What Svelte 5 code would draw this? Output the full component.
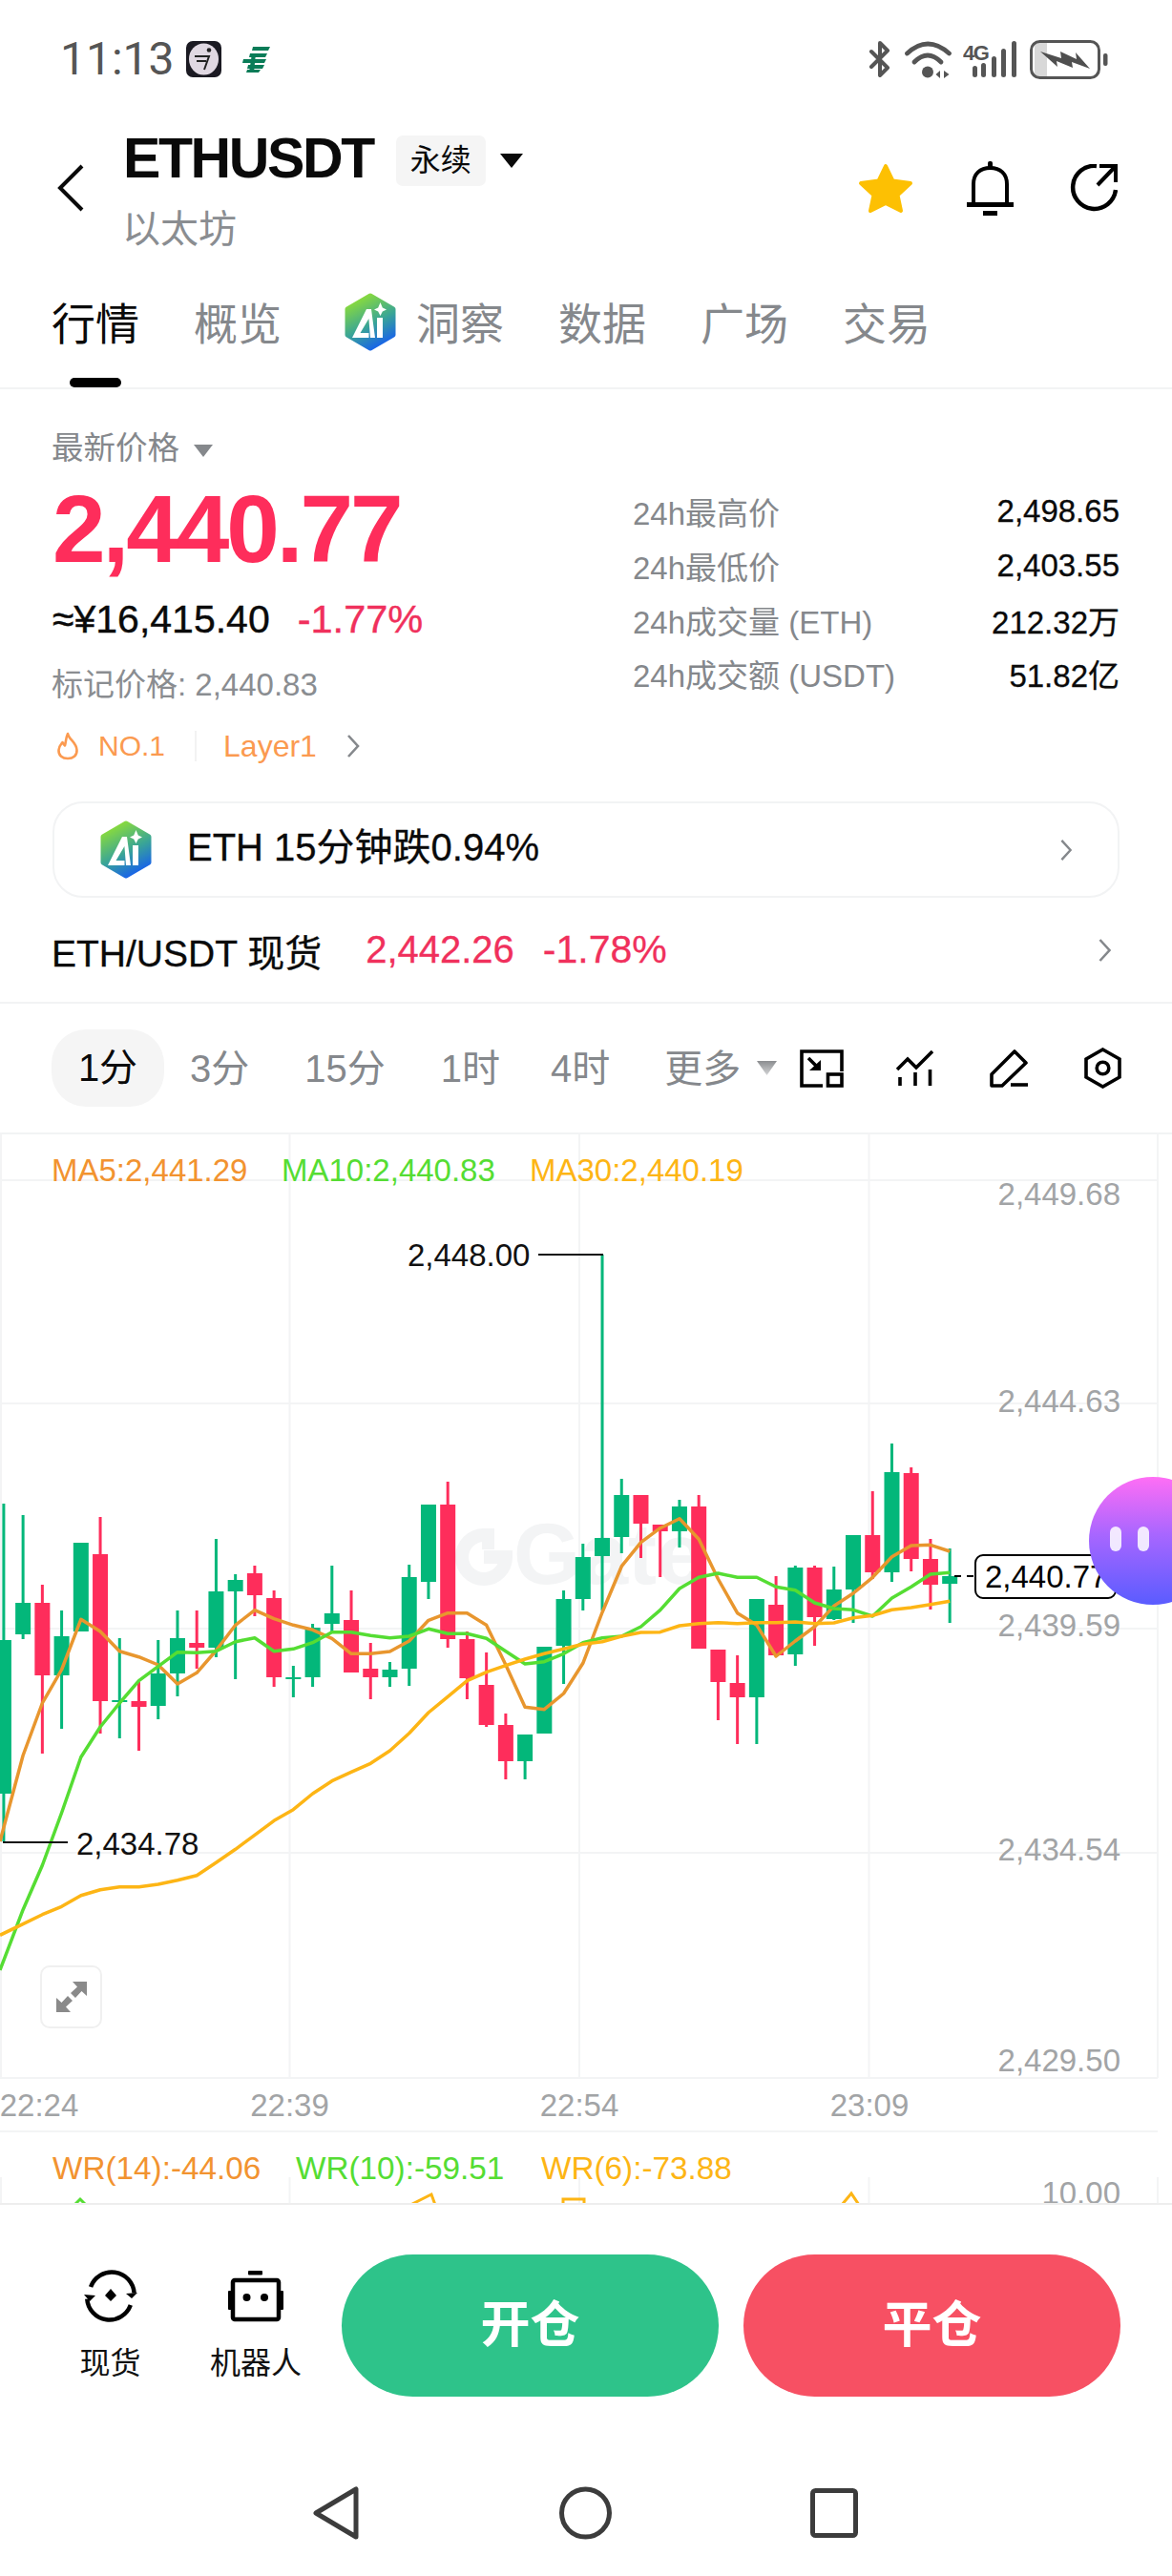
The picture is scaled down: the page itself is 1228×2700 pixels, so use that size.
<script>
  const tabs = ['概览'];
  const stats = [
    ['24h最高价', '2,498.65'],
    ['24h最低价', '2,403.55'],
    ['24h成交量 (ETH)', '212.32万'],
    ['24h成交额 (USDT)', '51.82亿']
  ];
  const candles = [
    ['g',1576,1719,1880,1930],['g',1588,1680,1713,1718],['r',1661,1680,1756,1838],['g',1688,1715,1756,1812],
    ['g',1617,1617,1710,1710],['r',1590,1629,1783,1817],['g',1717,1782,1784,1822],['r',1763,1783,1789,1835],
    ['g',1719,1754,1788,1802],['g',1688,1717,1754,1778],['r',1688,1722,1727,1749],['g',1613,1668,1727,1737],
    ['g',1650,1656,1668,1760],['r',1641,1649,1672,1694],['r',1667,1675,1758,1768],['g',1746,1758,1760,1779],
    ['g',1702,1706,1758,1768],['g',1641,1691,1702,1710],['r',1667,1698,1753,1753],['r',1722,1749,1758,1781],
    ['g',1742,1750,1758,1768],['g',1640,1653,1749,1767],['g',1577,1577,1658,1676],['r',1553,1577,1718,1727],
    ['r',1710,1718,1759,1781],['r',1732,1766,1808,1810],['r',1796,1808,1846,1865],['g',1818,1818,1846,1865],
    ['g',1726,1726,1817,1817],['g',1667,1676,1725,1765],['g',1618,1632,1676,1688],['g',1315,1612,1631,1688],
    ['g',1550,1567,1611,1628],['r',1567,1567,1597,1633],['r',1598,1598,1605,1653],['g',1572,1579,1605,1622],
    ['r',1567,1579,1728,1728],['r',1729,1729,1763,1803],['r',1735,1764,1779,1828],['g',1676,1676,1779,1828],
    ['r',1652,1682,1735,1735],['g',1641,1643,1734,1746],['r',1641,1643,1695,1725],['g',1642,1666,1697,1698],
    ['g',1609,1609,1666,1701],['r',1563,1609,1648,1655],['g',1513,1543,1648,1658],['r',1538,1544,1634,1647],
    ['r',1613,1634,1661,1687],['g',1623,1652,1660,1701]
  ];
  const ma5 = [990,720,555,450,292,330,392,410,435,495,460,390,310,263,290,310,325,352,400,400,393,360,295,272,272,310,435,568,575,525,430,270,125,50,5,-25,40,165,272,310,408,360,315,250,210,160,95,60,58,78];
  const ma10 = [1395,1205,1065,900,725,630,555,485,440,395,397,392,362,350,392,385,365,332,332,343,350,345,322,337,337,352,392,432,425,400,365,350,345,315,263,195,160,147,160,160,190,200,240,258,262,282,225,190,150,145];
  const ma30 = [1285,1250,1220,1195,1160,1142,1133,1133,1125,1112,1097,1057,1015,970,925,890,840,800,772,745,705,650,585,535,485,458,437,417,400,385,370,362,345,333,332,312,305,302,305,302,302,300,305,303,287,280,262,255,245,235];
  const cx = (i) => 3.9 + 20.23 * i;
  const pts = (a) => a.map((z, i) => `${i === 0 ? 0 : cx(i).toFixed(1)},${(1600 + z / 3).toFixed(1)}`).join(' ');
  const vLines = [1, 303.5, 607, 910.5, 1213];
  const hLines = [1237, 1471, 1707, 1942, 2178, 2234];
  const axis = [['2,449.68',1253],['2,444.63',1470],['2,439.59',1705],['2,434.54',1940],['2,429.50',2161]];
  const times = [['22:24',41],['22:39',303.5],['22:54',607],['23:09',911]];
</script>

{#snippet aiLogo(id)}
  <svg class="ai" viewBox="0 0 56 61" width="56" height="61">
    <defs>
      <linearGradient id={id} x1="0.25" y1="0" x2="0.7" y2="1">
        <stop offset="0" stop-color="#8fdf35"/>
        <stop offset="0.55" stop-color="#3aa596"/>
        <stop offset="1" stop-color="#165fee"/>
      </linearGradient>
    </defs>
    <path d="M28 3 L52 17 V44 L28 58 L4 44 V17 Z" fill={`url(#${id})`} stroke={`url(#${id})`} stroke-width="5" stroke-linejoin="round"/>
    <path d="M9 47 L24 17 H29 L33 47 H28 L26.4 27 L17.5 42 H26.5 V47 Z" fill="#fff"/>
    <rect x="35" y="26" width="6" height="21" fill="#fff"/>
    <path d="M38.5 10 L40.8 15.5 L45 17.5 L40.8 19.5 L38.5 24 L36.2 19.5 L32 17.5 L36.2 15.5 Z" fill="#fff"/>
  </svg>
{/snippet}

{#snippet chevron(w, h)}
  <svg viewBox="0 0 14 26" width={w} height={h} class="chev"><path d="M2 2 L12 13 L2 24" fill="none" stroke="#85888c" stroke-width="2.6"/></svg>
{/snippet}

<div class="page">
  <div class="status">
    <div class="status-left">
      <span class="clock">11:13</span>
      <svg class="app1" viewBox="0 0 37 38" width="37" height="38">
        <rect width="37" height="38" rx="7" fill="#1b1a22"/>
        <ellipse cx="18.5" cy="19" rx="15.5" ry="16.5" fill="#e0d8e2"/>
        <circle cx="24" cy="9.5" r="2.3" fill="#222"/>
        <path d="M9 16 H24 L19 30 M11 21 H21" fill="none" stroke="#222" stroke-width="2"/>
      </svg>
      <svg class="post" viewBox="0 0 29 27" width="29" height="27">
        <path d="M11 0 H29 L27 4 H10 Z M8 7 H26 L24 11 H7 Z M1 13 H25 L23 17 H0 Z M6 19 H23 L21 23 H5 Z M5 24 H19 L17 27 H4 Z" fill="#0a7c58"/>
        <path d="M10 7 H14 L12 27 H7 Z" fill="#0a7c58"/>
      </svg>
    </div>
    <div class="status-right">
      <svg viewBox="0 0 24 38" width="24" height="38"><path d="M3 11 L20 28 L12 36 V2 L20 10 L3 27" fill="none" stroke="#555" stroke-width="4" stroke-linejoin="round" stroke-linecap="round"/></svg>
      <svg class="wifi" viewBox="0 0 49 39" width="49" height="39">
        <g fill="none" stroke="#555" stroke-width="4.8" stroke-linecap="round">
          <path d="M2.5 13 Q24 -7 46.5 13"/><path d="M10 22 Q24 8 38 22"/>
        </g>
        <circle cx="24" cy="32.5" r="6" fill="#555"/>
        <path d="M37 31 V39 L32.5 35 Z M41 31 V39 L46.5 35 Z" fill="#555"/>
      </svg>
      <svg class="cell" viewBox="0 0 57 39" width="57" height="39">
        <text x="0" y="20" class="fourg">4G</text>
        <g fill="#555">
          <rect x="10" y="26" width="5" height="12" rx="2.5"/>
          <rect x="19" y="23" width="5" height="15" rx="2.5"/>
          <rect x="30" y="16" width="5" height="22" rx="2.5"/>
          <rect x="40" y="8" width="5" height="30" rx="2.5"/>
          <rect x="51" y="0" width="5" height="38" rx="2.5"/>
        </g>
      </svg>
      <svg class="batt" viewBox="0 0 82 41" width="82" height="41">
        <rect x="5" y="3" width="13" height="35" fill="#d8d8d8"/>
        <rect x="1.5" y="1.5" width="71" height="38" rx="9" fill="none" stroke="#555" stroke-width="3"/>
        <rect x="77" y="14" width="4.5" height="13" rx="2" fill="#555"/>
        <path d="M11 12 L33 19 L32 12 L49 20 L48 13 L63 30 L44 23 L45 29 L28 22 L29 28 Z" fill="#4f4f4f"/>
      </svg>
    </div>
  </div>

  <div class="header">
    <svg class="back" viewBox="0 0 28 50" width="28" height="50"><path d="M26 2 L3 25 L26 48" fill="none" stroke="#0a0a0a" stroke-width="4"/></svg>
    <div class="title-col">
      <div class="title-row">
        <span class="symbol">ETHUSDT</span>
        <span class="tag">永续</span>
        <svg viewBox="0 0 24 15" width="24" height="15" class="tag-arrow"><path d="M0 0 H24 L12 15 Z" fill="#0a0a0a"/></svg>
      </div>
      <div class="sub">以太坊</div>
    </div>
    <div class="head-icons">
      <svg viewBox="0 0 58 53" width="58" height="53"><path d="M29 3 L36.5 18.5 L55 21 L41.5 33.5 L45 50 L29 42 L13 50 L16.5 33.5 L3 21 L21.5 18.5 Z" fill="#fdc003" stroke="#fdc003" stroke-width="4" stroke-linejoin="round"/></svg>
      <svg viewBox="0 0 49 57" width="49" height="57">
        <path d="M7 46 V24 C7 13 14 7 24.5 7 C35 7 42 13 42 24 V46" fill="none" stroke="#000" stroke-width="4"/>
        <rect x="22" y="0" width="5" height="8" rx="2" fill="#000"/>
        <rect x="0" y="43" width="49" height="5" fill="#000"/>
        <rect x="17" y="52" width="15" height="5" fill="#000"/>
      </svg>
      <svg viewBox="0 0 50 50" width="50" height="50">
        <path d="M28 2 A22.5 22.5 0 1 0 48 27" fill="none" stroke="#000" stroke-width="4.5"/>
        <path d="M31 2 H48 V19 M48 2 L29 22" fill="none" stroke="#000" stroke-width="4"/>
      </svg>
    </div>
  </div>

  <div class="tabs">
    <div class="tab active">行情<div class="indicator"></div></div>
    {#each tabs as t}<div class="tab">{t}</div>{/each}
    <div class="tab ai-tab">{@render aiLogo('g1')}<span>洞察</span></div>
    <div class="tab">数据</div>
    <div class="tab">广场</div>
    <div class="tab">交易</div>
  </div>

  <div class="market">
    <div class="m-left">
      <div class="latest">最新价格<svg viewBox="0 0 20 13" width="20" height="13"><path d="M0 0 H20 L10 13 Z" fill="#85888c"/></svg></div>
      <div class="price">2,440.77</div>
      <div class="approx"><span>≈¥16,415.40</span><span class="red">-1.77%</span></div>
      <div class="mark">标记价格: 2,440.83</div>
      <div class="rank">
        <svg viewBox="0 0 24 30" width="24" height="30"><path d="M12 2 C13 8 21 11 21.5 19 C22 25 17.5 28 12 28 C6.5 28 2 25 2.5 19 C2.8 15 5 13 6.5 11 C7.5 13 8 14 9 14.5 C10 11 10 6 12 2 Z" fill="none" stroke="#fb9a50" stroke-width="2.6" stroke-linejoin="round"/></svg>
        <span class="no">NO.1</span>
        <span class="vsep"></span>
        <span class="layer">Layer1</span>
        {@render chevron(14, 26)}
      </div>
    </div>
    <div class="m-right">
      {#each stats as s}
        <div class="stat"><span class="k">{s[0]}</span><span class="v">{s[1]}</span></div>
      {/each}
    </div>
  </div>

  <div class="banner">
    {@render aiLogo('g2')}
    <span class="banner-text">ETH 15分钟跌0.94%</span>
    {@render chevron(14, 24)}
  </div>

  <div class="spot">
    <span class="spot-name">ETH/USDT 现货</span>
    <span class="red spot-p">2,442.26</span>
    <span class="red spot-c">-1.78%</span>
    {@render chevron(15, 26)}
  </div>

  <div class="periods">
    <span class="pill">1分</span>
    <span class="p p3">3分</span>
    <span class="p p15">15分</span>
    <span class="p p1h">1时</span>
    <span class="p p4h">4时</span>
    <span class="p pmore">更多</span>
    <svg class="more-arrow" viewBox="0 0 21 15" width="21" height="15">
      <defs><linearGradient id="ma" x1="0" y1="0" x2="0" y2="1"><stop offset="0" stop-color="#8b8d90"/><stop offset="1" stop-color="#d4d5d6"/></linearGradient></defs>
      <path d="M0 0 H21 L10.5 15 Z" fill="url(#ma)"/>
    </svg>
    <svg class="t1" viewBox="0 0 46 40" width="46" height="40">
      <path d="M44 23 V2 H2 V38 H24" fill="none" stroke="#000" stroke-width="3.6"/>
      <rect x="29.5" y="26" width="14.5" height="12" fill="none" stroke="#000" stroke-width="3.6"/>
      <path d="M9 9 L19 19" stroke="#000" stroke-width="3.6"/>
      <path d="M22 11 V22 H10 Z" fill="#000"/>
    </svg>
    <svg class="t2" viewBox="0 0 39 38" width="39" height="38">
      <path d="M1 20 L12 9 L21 18 L38 1" fill="none" stroke="#000" stroke-width="3.6"/>
      <path d="M4 28 V37 M20 23 V37 M35.5 20 V37" stroke="#000" stroke-width="3.6"/>
    </svg>
    <svg class="t3" viewBox="0 0 41 40" width="41" height="40">
      <path d="M26 2 L38 14 L13 38 H2 V26 Z" fill="none" stroke="#000" stroke-width="3.6" stroke-linejoin="round"/>
      <path d="M22 37 H40" stroke="#000" stroke-width="3.6"/>
    </svg>
    <svg class="t4" viewBox="0 0 39 43" width="39" height="43">
      <path d="M19.5 2 L37 12 V31 L19.5 41 L2 31 V12 Z" fill="none" stroke="#000" stroke-width="3.6"/>
      <circle cx="19.5" cy="21.5" r="6.3" fill="none" stroke="#000" stroke-width="3.6"/>
    </svg>
  </div>

  <div class="chart">
    <svg class="plot" viewBox="0 1187 1228 1123" width="1228" height="1123">
      <rect x="0" y="1187" width="1228" height="2" fill="#f2f3f4"/>
      {#each vLines as x}
        <line x1={x} x2={x} y1="1187" y2="2178" class="grid"/>
        <line x1={x} x2={x} y1="2282" y2="2310" class="grid"/>
      {/each}
      {#each hLines as y}
        <line x1="0" x2="1213" y1={y} y2={y} class="grid"/>
      {/each}

      <g class="wm">
        <path d="M507 1609 A23 23 0 1 0 530 1632 H507" fill="none" stroke="#f3f4f5" stroke-width="14"/>
        <rect x="505" y="1602" width="13" height="22" fill="#f3f4f5"/>
        <text x="538" y="1660" class="wm-text">Gate</text>
      </g>

      {#each candles as c, i}
        <g fill={c[0] === 'g' ? '#03b77a' : '#fe2d5b'}>
          <rect x={cx(i) - 1.5} y={c[1]} width="3" height={c[4] - c[1]}/>
          <rect x={cx(i) - 8} y={c[2]} width="16" height={c[3] - c[2]}/>
        </g>
      {/each}

      <polyline points={pts(ma5)} class="ln" stroke="#e8962e"/>
      <polyline points={pts(ma10)} class="ln" stroke="#55dd33"/>
      <polyline points={pts(ma30)} class="ln" stroke="#fdb515"/>

      <text x="54" y="1238" class="t32" fill="#f29330">MA5:2,441.29</text>
      <text x="295" y="1238" class="t32" fill="#55dd33">MA10:2,440.83</text>
      <text x="555" y="1238" class="t32" fill="#fdb515">MA30:2,440.19</text>

      {#each axis as a}
        <text x="1174" y={a[1] + 10} class="t33 end" fill="#a2a4a6">{a[0]}</text>
      {/each}
      {#each times as t}
        <text x={t[1]} y="2218" class="t33 mid" fill="#a2a4a6">{t[0]}</text>
      {/each}

      <text x="427" y="1327" class="t33" fill="#111">2,448.00</text>
      <line x1="564" x2="632" y1="1315" y2="1315" stroke="#111" stroke-width="2"/>
      <text x="80" y="1944" class="t33" fill="#111">2,434.78</text>
      <line x1="3" x2="71" y1="1931" y2="1931" stroke="#111" stroke-width="2"/>

      <line x1="1000" x2="1021" y1="1652" y2="1652" stroke="#000" stroke-width="2" stroke-dasharray="7 6"/>
      <rect x="1022" y="1630" width="147" height="45" rx="8" fill="#fff" stroke="#000" stroke-width="2"/>
      <text x="1032" y="1664" class="t33" fill="#000">2,440.77</text>

      <text x="55" y="2284" class="t32b" fill="#f29330">WR(14):-44.06</text>
      <text x="310" y="2284" class="t32b" fill="#55dd33">WR(10):-59.51</text>
      <text x="567" y="2284" class="t32b" fill="#fdb515">WR(6):-73.88</text>
      <text x="1174" y="2310" class="t33 end" fill="#a2a4a6">10.00</text>
      <g fill="none" stroke="#fdb515" stroke-width="3">
        <path d="M430 2311 L452 2300 L456 2311"/>
        <path d="M590 2311 V2305 H612 V2311"/>
        <path d="M882 2311 L892 2299 L900 2311"/>
      </g>
      <path d="M78 2311 L84 2305 L90 2311" fill="none" stroke="#55dd33" stroke-width="3"/>
    </svg>

    <div class="expand">
      <svg viewBox="0 0 32 32" width="32" height="32">
        <path d="M32 0 V15 L26.5 10 L20 17 L15 12 L22 5.5 L17 0 Z M0 32 V17 L5.5 22 L12 15 L17 20 L10 26.5 L15 32 Z" fill="#8a8a8a"/>
      </svg>
    </div>
    <div class="bubble"><i></i><i></i></div>
  </div>

  <div class="bottom">
    <div class="actions">
      <div class="act a1">
        <svg viewBox="0 0 56 57" width="56" height="57">
          <path d="M6 22 A23.5 23.5 0 0 1 52 22" fill="none" stroke="#000" stroke-width="4.5" transform="rotate(8 28 28)"/>
          <path d="M50 35 A23.5 23.5 0 0 1 4 35" fill="none" stroke="#000" stroke-width="4.5" transform="rotate(8 28 28)"/>
          <path d="M44 26 L56 25 L50 31 Z M0 27 L12 28 L6 34 Z" fill="#000"/>
          <path d="M28 21 L34 28 L28 34 L22 28 Z" fill="#000"/>
        </svg>
        <span>现货</span>
      </div>
      <div class="act a2">
        <svg viewBox="0 0 58 53" width="58" height="53">
          <rect x="21" y="0" width="15" height="4.5" rx="1" fill="#000"/>
          <rect x="5" y="10" width="48" height="41" rx="2" fill="none" stroke="#000" stroke-width="4.5"/>
          <rect x="0" y="21" width="4" height="20" rx="1" fill="#000"/>
          <rect x="54" y="21" width="4" height="20" rx="1" fill="#000"/>
          <circle cx="19.5" cy="28" r="4" fill="#000"/>
          <circle cx="38" cy="28" r="4" fill="#000"/>
        </svg>
        <span>机器人</span>
      </div>
      <div class="btn open">开仓</div>
      <div class="btn close">平仓</div>
    </div>
    <div class="nav">
      <svg viewBox="0 0 48 56" width="48" height="56"><path d="M45 3 V53 L3 28 Z" fill="none" stroke="#3c3c3c" stroke-width="5" stroke-linejoin="round"/></svg>
      <svg class="n2" viewBox="0 0 55 56" width="55" height="56"><circle cx="27.5" cy="28" r="25" fill="none" stroke="#3c3c3c" stroke-width="5"/></svg>
      <svg class="n3" viewBox="0 0 50 52" width="50" height="52"><rect x="2.5" y="2.5" width="45" height="47" rx="3" fill="none" stroke="#3c3c3c" stroke-width="5"/></svg>
    </div>
  </div>
</div>

<style>
  :global(body) { margin: 0; background: #fff; }
  .page {
    width: 1228px; height: 2700px; overflow: hidden; background: #fff; position: relative;
    display: flex; flex-direction: column;
    font-family: "Liberation Sans", "Noto Sans CJK SC", sans-serif; color: #0a0a0a;
  }
  svg { display: block; flex: none; }

  .status { height: 124px; flex: none; display: flex; justify-content: space-between; align-items: center; padding: 0 67px 0 63px; box-sizing: border-box; }
  .status-left { display: flex; align-items: center; }
  .clock { font-family: Roboto, sans-serif; font-size: 48px; line-height: 50px; color: #555; width: 132px; }
  .post { margin-left: 22px; }
  .status-right { display: flex; align-items: center; gap: 14px; }
  .cell { margin-left: -2px; }
  .fourg { font-family: "Liberation Sans", sans-serif; font-weight: 700; font-size: 22px; fill: #555; letter-spacing: -1.6px; }
  .batt { margin-left: -1px; }

  .header { height: 146px; flex: none; display: flex; align-items: center; padding: 0 57px 0 60px; box-sizing: border-box; }
  .title-col { align-self: flex-start; margin-left: 41px; padding-top: 6px; }
  .title-row { display: flex; align-items: center; height: 72px; }
  .symbol { font-weight: 700; font-size: 59px; line-height: 72px; letter-spacing: -2.4px; }
  .tag { margin-left: 24px; margin-top: 4px; width: 94px; height: 53px; border-radius: 7px; background: #f5f5f5; font-size: 32px; line-height: 53px; text-align: center; }
  .tag-arrow { margin-left: 15px; margin-top: 4px; }
  .sub { margin-top: 16px; font-size: 40px; line-height: 44px; color: #8a8d91; margin-left: -1px; }
  .head-icons { margin-left: auto; display: flex; align-items: center; }
  .head-icons svg:nth-child(2) { margin-left: 56px; }
  .head-icons svg:nth-child(3) { margin-left: 59px; }

  .tabs { height: 138px; flex: none; box-sizing: border-box; padding: 48px 0 0 54px; display: flex; align-items: flex-start; gap: 57px; border-bottom: 2px solid #f2f3f4; }
  .tab { font-size: 46px; line-height: 44px; color: #85888c; width: 92px; text-align: center; white-space: nowrap; }
  .tab.active { color: #0a0a0a; }
  .indicator { width: 54px; height: 10px; border-radius: 5px; background: #000; margin: 34px auto 0; }
  .ai-tab { width: auto; display: flex; align-items: center; gap: 20px; margin-left: 8px; }
  .ai-tab :global(.ai) { margin: -12px 0 -6px; }

  .market { height: 432px; flex: none; display: flex; justify-content: space-between; padding: 0 55px 0 54px; box-sizing: border-box; }
  .m-left { padding-top: 40px; }
  .latest { display: flex; align-items: center; gap: 15px; font-size: 33.5px; line-height: 44px; color: #85888c; }
  .latest svg { margin-top: 4px; }
  .price { margin-top: 12px; font-weight: 700; font-size: 100px; line-height: 100px; letter-spacing: -3.1px; color: #fe2d5b; margin-left: 1px; }
  .approx { margin-top: 20px; font-size: 41px; line-height: 50px; display: flex; gap: 29px; white-space: nowrap; margin-left: 1px; -webkit-text-stroke: 0.4px currentColor; }
  .red { color: #f0305c; }
  .approx .red { font-size: 41.5px; }
  .mark { margin-top: 22px; font-size: 33px; line-height: 44px; color: #8a8d91; }
  .rank { margin-top: 20px; height: 44px; display: flex; align-items: center; font-size: 32px; color: #fb9a50; }
  .rank svg:first-child { margin-left: 5px; }
  .no { margin-left: 20px; font-size: 30px; }
  .vsep { width: 2px; height: 32px; background: #f2f2f2; margin: 0 28px 0 31px; }
  .rank :global(.chev) { margin-left: 31px; }
  .m-right { width: 510px; padding-top: 100px; }
  .stat { height: 56.7px; display: flex; justify-content: space-between; align-items: center; font-size: 33px; white-space: nowrap; }
  .stat .k { color: #85888c; font-size: 33px; }
  .stat .v { color: #0a0a0a; -webkit-text-stroke: 0.3px currentColor; }

  .banner { height: 101px; flex: none; box-sizing: border-box; margin: 0 55px; border: 2px solid #f2f3f4; border-radius: 32px; display: flex; align-items: center; padding: 0 47px 0 47px; }
  .banner-text { margin-left: 36px; font-size: 40px; line-height: 50px; margin-top: -6px; white-space: nowrap; -webkit-text-stroke: 0.3px currentColor; }
  .banner :global(.chev) { margin-left: auto; }

  .spot { height: 111px; flex: none; box-sizing: border-box; border-bottom: 2px solid #f2f3f4; display: flex; align-items: center; padding: 0 63px 0 54px; white-space: nowrap; }
  .spot-name { font-size: 39px; -webkit-text-stroke: 0.3px currentColor; }
  .spot-p { font-size: 40px; margin-left: 46px; -webkit-text-stroke: 0.3px currentColor; }
  .spot-c { font-size: 41px; margin-left: 30px; -webkit-text-stroke: 0.3px currentColor; }
  .spot :global(.chev) { margin-left: auto; }

  .periods { height: 135px; flex: none; display: flex; align-items: center; padding-left: 54px; font-size: 40px; white-space: nowrap; }
  .pill { width: 118px; height: 81px; border-radius: 36px; background: #f5f5f5; line-height: 81px; text-align: center; }
  .p { color: #85888c; line-height: 50px; }
  .p3 { margin-left: 27px; }
  .p15 { margin-left: 58px; }
  .p1h { margin-left: 58px; }
  .p4h { margin-left: 53px; }
  .pmore { margin-left: 57px; }
  .more-arrow { margin-left: 17px; }
  .t1 { margin-left: 24px; }
  .t2 { margin-left: 55px; }
  .t3 { margin-left: 59px; }
  .t4 { margin-left: 58px; }

  .chart { height: 1123px; flex: none; position: relative; overflow: hidden; }
  .plot text { font-family: "Liberation Sans", sans-serif; }
  .grid { stroke: #f3f4f5; stroke-width: 2; }
  .ln { fill: none; stroke-width: 3.5; stroke-linejoin: round; }
  .t32 { font-size: 33px; }
  .t32b { font-size: 33.3px; }
  .t33 { font-size: 33px; }
  .end { text-anchor: end; }
  .mid { text-anchor: middle; }
  .wm-text { font-size: 90px; font-weight: 700; fill: #f3f4f5; }

  .expand { position: absolute; left: 42px; top: 873px; width: 65px; height: 66px; box-sizing: border-box; border: 2px solid #f0f0f0; border-radius: 10px; background: #fff; display: flex; align-items: center; justify-content: center; }
  .bubble { position: absolute; left: 1141px; top: 361px; width: 134px; height: 134px; border-radius: 50%; background: linear-gradient(180deg, #ff6ef5 0%, #a866ff 45%, #5a5cff 100%); }
  .bubble i { position: absolute; top: 52px; width: 12px; height: 26px; border-radius: 6px; background: rgba(255,255,255,.85); }
  .bubble i:first-child { left: 22px; }
  .bubble i:last-child { left: 51px; }

  .bottom { flex: 1; position: relative; background: #fff; border-top: 2px solid #eeeeee; margin-top: -1px; display: flex; flex-direction: column; }
  .actions { display: flex; align-items: flex-start; padding-top: 52px; }
  .act { display: flex; flex-direction: column; align-items: center; font-size: 32px; line-height: 44px; white-space: nowrap; color: #111; }
  .act svg { height: 57px; }
  .a1 { margin-left: 83px; margin-top: 15px; width: 65px; }
  .a2 { margin-left: 70px; margin-top: 15px; width: 100px; }
  .act span { margin-top: 20px; }
  .btn { height: 149px; width: 395px; border-radius: 75px; color: #fff; font-size: 52px; font-weight: 700; line-height: 149px; text-align: center; }
  .open { margin-left: 40px; background: #2ec38a; }
  .close { margin-left: 26px; background: #f75063; }
  .nav { display: flex; align-items: center; padding-left: 328px; margin-top: 94px; }
  .n2 { margin-left: 210px; }
  .n3 { margin-left: 208px; }
</style>
